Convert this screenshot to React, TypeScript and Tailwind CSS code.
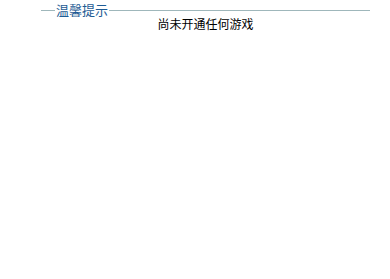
export default function App() {
  return (
    <div className="w-[390px] h-[279px] bg-white pt-[3px]" style={{ fontFamily: '"Noto Sans CJK SC", "Liberation Sans", sans-serif' }}>
      <div className="pl-[41px] w-[370px]">
        <fieldset className="border-t border-[#9fb7bb] m-0 p-0">
          <legend className="ml-[14px] px-[1px] text-[13px] leading-[14px] text-[#1e5b94]">温馨提示</legend>
          <div className="text-center text-[12px] leading-[14px] text-black pb-[2px]">尚未开通任何游戏</div>
        </fieldset>
      </div>
    </div>
  )
}
